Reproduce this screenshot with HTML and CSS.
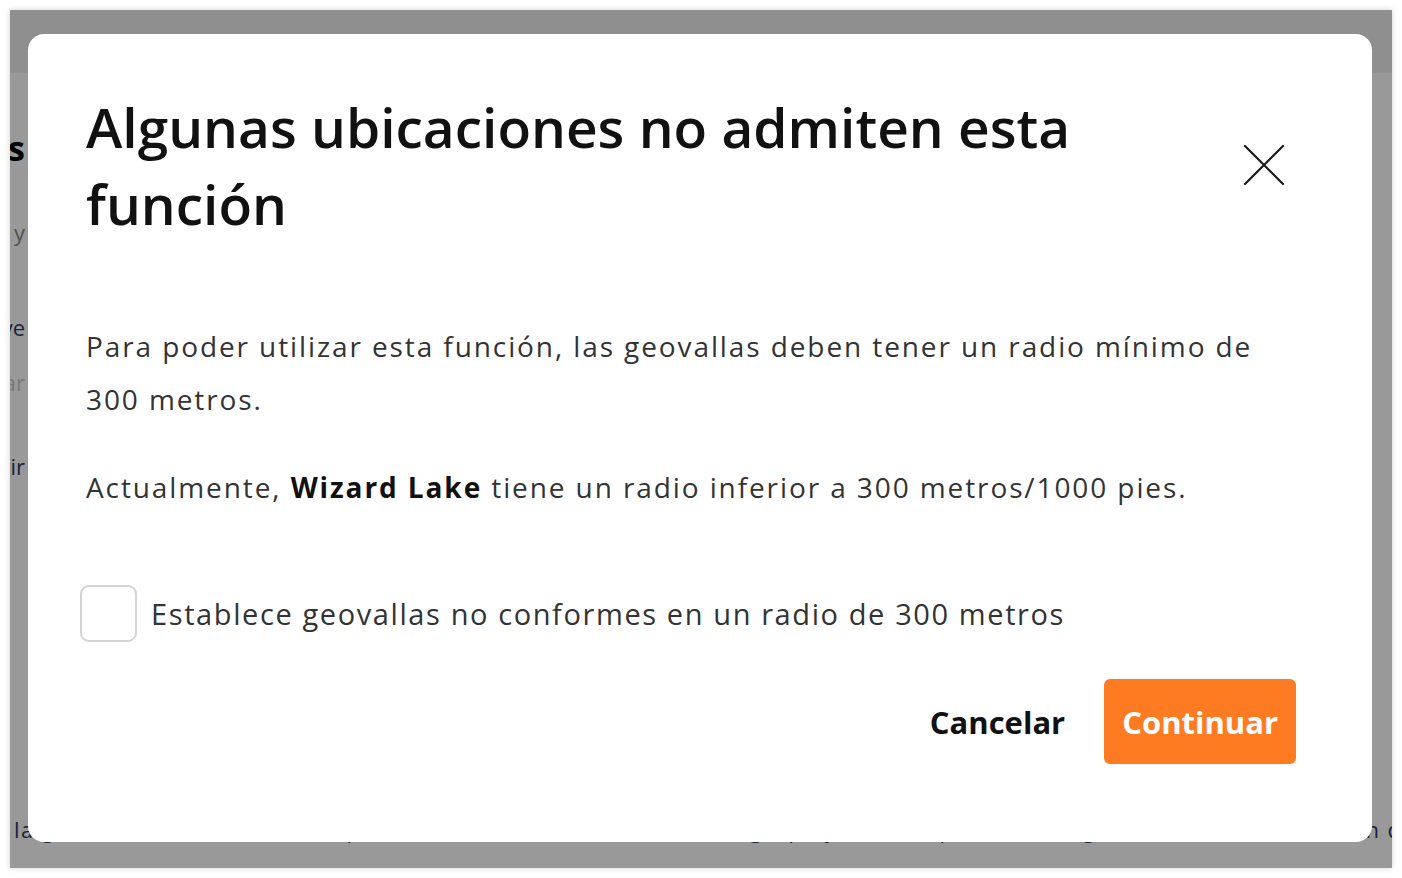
FILE: index.html
```html
<!DOCTYPE html>
<html lang="es">
<head>
    <meta charset="UTF-8">
    <meta name="viewport" content="width=device-width, initial-scale=1.0">
    <title>Geovallas</title>
    <link rel="stylesheet" href="styles.css">
</head>
<body>
    <div class="frame">
        <!-- página de fondo, tapada por el diálogo -->
        <div class="page">
            <div class="page-header"></div>
            <div class="page-side">
                <div class="side-line side-title"><span>Ajustes</span></div>
                <div class="side-line side-muted"><span>Alertas y</span></div>
                <div class="side-line side-link"><span>Radio de clave</span></div>
                <div class="side-line side-faint"><span>Configurar</span></div>
                <div class="side-line side-link"><span>Elegir</span></div>
            </div>
            <div class="page-foot">
                <span>la geovalla seleccionada se aplicará a todas las ubicaciones del grupo y a los dispositivos asignados de cada ubicación del</span>
            </div>
        </div>

        <div class="overlay">
            <div class="modal" role="dialog" aria-labelledby="modalTitle">
                <div class="modal-head">
                    <h2 class="modal-title" id="modalTitle">Algunas ubicaciones no admiten esta función</h2>
                    <button class="close-btn" type="button" aria-label="Cerrar">
                        <svg width="44" height="44" viewBox="0 0 44 44">
                            <path d="M3 3 L41 41 M41 3 L3 41" stroke="#1a1a1a" stroke-width="2.2" stroke-linecap="round" fill="none"/>
                        </svg>
                    </button>
                </div>

                <div class="modal-body">
                    <p>Para poder utilizar esta función, las geovallas deben tener un radio mínimo de 300 metros.</p>
                    <p>Actualmente, <strong>Wizard Lake</strong> tiene un radio inferior a 300 metros/1000 pies.</p>
                </div>

                <label class="check">
                    <input type="checkbox">
                    <span class="check-box"></span>
                    <span class="check-text">Establece geovallas no conformes en un radio de 300 metros</span>
                </label>

                <div class="modal-actions">
                    <button class="btn btn-link" type="button">Cancelar</button>
                    <button class="btn btn-primary" type="button">Continuar</button>
                </div>
            </div>
        </div>
    </div>
</body>
</html>
```

FILE: styles.css
```css
:root {
    --orange: #ff7b22;
    --text: #111;
    --text-body: #333;
    --border: #d4d4d4;
    --font: 'Open Sans', 'Noto Sans', sans-serif;
}

* {
    box-sizing: border-box;
}

html, body {
    margin: 0;
    background: #fff;
}

body {
    padding: 10px;
    font-family: var(--font);
    color: var(--text);
}

.frame {
    position: relative;
    width: 1382px;
    height: 858px;
    overflow: hidden;
    background: #fff;
    box-shadow: 0 0 6px rgba(0, 0, 0, 0.18);
}

/* Página de fondo */
.page {
    display: flex;
    flex-direction: column;
    height: 100%;
}

.page-header {
    height: 63px;
    background: #eeeeee;
    flex-shrink: 0;
}

.page-side {
    display: flex;
    flex-direction: column;
    width: 15px;
    padding-top: 52px;
}

.side-line {
    display: flex;
    justify-content: flex-end;
    white-space: nowrap;
    font-size: 22px;
}

.side-title {
    font-size: 34px;
    font-weight: 700;
    color: #000;
    height: 92px;
}

.side-muted {
    color: #888;
    height: 95px;
}

.side-link {
    color: #2c3b66;
    height: 55px;
}

.side-faint {
    color: #c8c8c8;
    height: 84px;
}

.page-foot {
    margin-top: auto;
    padding: 0 0 24px 4px;
    font-size: 22px;
    color: #2c3b66;
    white-space: nowrap;
    overflow: hidden;
    letter-spacing: 1.4px;
}

/* Capa oscura y diálogo */
.overlay {
    position: absolute;
    inset: 0;
    background: rgba(0, 0, 0, 0.4);
    padding: 24px 20px 26px 18px;
}

.modal {
    width: 1344px;
    height: 808px;
    background: #fff;
    border-radius: 16px;
    padding: 54px 76px 0 58px;
    display: flex;
    flex-direction: column;
}

.modal-head {
    display: flex;
    align-items: center;
    justify-content: space-between;
    gap: 40px;
}

.modal-title {
    margin: 0;
    font-size: 55px;
    line-height: 77px;
    font-weight: 600;
    color: var(--text);
    max-width: 1050px;
}

.close-btn {
    width: 64px;
    height: 64px;
    padding: 0;
    border: 0;
    background: transparent;
    display: flex;
    align-items: center;
    justify-content: center;
    cursor: pointer;
}

.modal-body {
    margin-top: 78px;
}

.modal-body p {
    margin: 0 0 35px;
    max-width: 1180px;
    font-size: 28px;
    line-height: 53px;
    letter-spacing: 1.9px;
    color: var(--text-body);
}

.modal-body strong {
    font-weight: 700;
    color: var(--text);
}

.check {
    display: flex;
    align-items: center;
    gap: 14px;
    margin-top: 36px;
    margin-left: -6px;
    cursor: pointer;
}

.check input {
    display: none;
}

.check-box {
    width: 57px;
    height: 57px;
    border: 2px solid var(--border);
    border-radius: 9px;
    flex-shrink: 0;
}

.check-text {
    font-size: 29px;
    letter-spacing: 1.6px;
    color: var(--text-body);
}

.modal-actions {
    display: flex;
    justify-content: flex-end;
    align-items: center;
    gap: 39px;
    margin-top: 37px;
}

.btn {
    font-family: var(--font);
    font-size: 31px;
    font-weight: 700;
    border: 0;
    cursor: pointer;
}

.btn-link {
    background: transparent;
    color: var(--text);
    padding: 0;
}

.btn-primary {
    background: var(--orange);
    color: #fff;
    height: 85px;
    padding: 0 18px;
    border-radius: 6px;
}
```
